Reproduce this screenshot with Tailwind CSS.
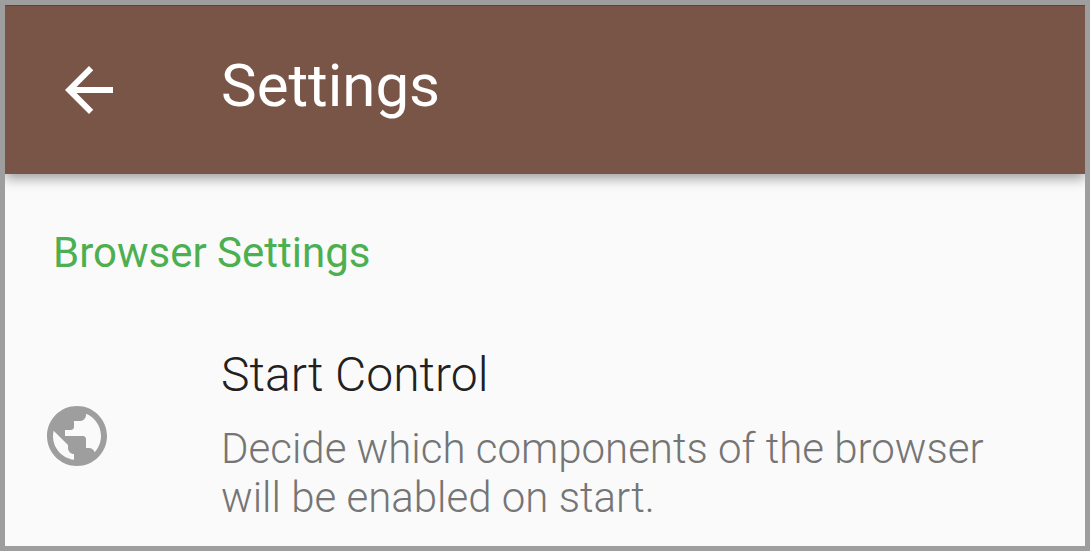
<!DOCTYPE html>
<html lang="en">
<head>
<meta charset="utf-8">
<meta name="viewport" content="width=device-width, initial-scale=1">
<title>Settings</title>
<script src="https://cdn.jsdelivr.net/npm/@tailwindcss/browser@4"></script>
</head>
<body class="font-['Roboto',sans-serif] bg-[#fafafa]">
<div class="min-h-screen overflow-clip border-5 border-[#9e9e9e] bg-[#fafafa]">
  <header class="flex items-center gap-24 border-t border-[#5f4339] bg-[#795548] py-12 pl-12 shadow-[0_4px_12px_rgba(0,0,0,0.4)]">
    <button type="button" aria-label="Back" class="size-[72px] shrink-0 text-white">
      <svg viewBox="0 0 24 24" class="size-full" fill="currentColor"><path d="M20 11H7.830l5.590-5.590L12 4l-8 8 8 8 1.410-1.410L7.830 13H20v-2z"/></svg>
    </button>
    <h1 class="pb-2 text-[60px] leading-[64px] text-white">Settings</h1>
  </header>
  <main class="pt-12 pb-4">
    <h2 class="px-12 text-[42px] leading-[62px] text-[#4caf50]">Browser Settings</h2>
    <a href="#" class="mt-[60px] flex items-center gap-[108px] pl-9">
      <svg viewBox="0 0 24 24" class="size-[72px] shrink-0" fill="#9e9e9e" aria-hidden="true"><path d="M12 2C6.480 2 2 6.480 2 12s4.480 10 10 10 10-4.480 10-10S17.520 2 12 2zm-1 17.930c-3.950-.490-7-3.850-7-7.930 0-.620.080-1.210.210-1.790L9 15v1c0 1.100.900 2 2 2v1.930zm6.900-2.540c-.260-.810-1-1.390-1.900-1.390h-1v-3c0-.550-.450-1-1-1H8v-2h2c.550 0 1-.450 1-1V7h2c1.100 0 2-.900 2-2v-.410c2.930 1.190 5 4.060 5 7.410 0 2.080-.800 3.970-2.100 5.390z"/></svg>
      <span class="flex flex-col gap-[18px] pb-1.5">
        <span class="text-[48px] leading-[62px] font-light text-[#212121]">Start Control</span>
        <span class="text-[42px] leading-[49px] font-light text-[#757575]">Decide which components of the browser<br>will be enabled on start.</span>
      </span>
    </a>
  </main>
</div>
</body>
</html>
